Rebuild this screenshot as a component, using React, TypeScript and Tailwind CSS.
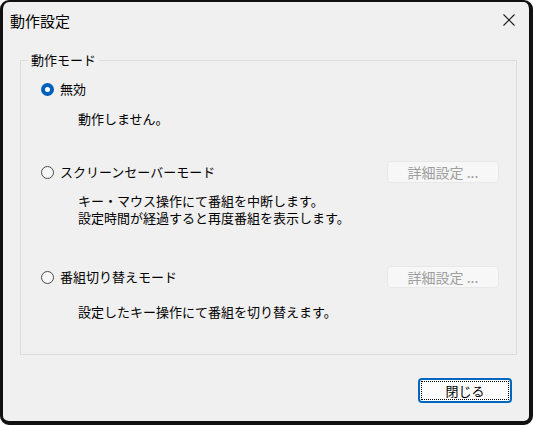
import React from "react";

const font = { fontFamily: '"Noto Sans CJK JP", "Noto Sans", sans-serif' };

function Radio({ checked }: { checked?: boolean }) {
  if (checked) {
    return (
      <span className="w-[13px] h-[13px] rounded-full bg-[#005fb8] flex items-center justify-center shrink-0">
        <span className="w-[5px] h-[5px] rounded-full bg-white" />
      </span>
    );
  }
  return <span className="w-[13px] h-[13px] rounded-full border border-[#4a4a4a] bg-[#f7f7f7] shrink-0" />;
}

function DisabledButton() {
  return (
    <div className="w-[112px] h-[22px] rounded-[4px] border border-[#e8e8e8] bg-[#f7f7f7] flex items-center justify-center text-[14px] text-[#9d9d9d] leading-none">
      詳細設定 ...
    </div>
  );
}

export default function App() {
  return (
    <div className="w-[533px] h-[425px] bg-white" style={font}>
      <div className="w-[533px] h-[425px] bg-[#f0f0f0] border-t-2 border-l-[3px] border-r-[4px] border-b-[4px] border-[#111] rounded-[9px] flex flex-col">
        <div className="h-[36px] flex items-center justify-between pl-[7px] pr-[14px] shrink-0">
          <span className="text-[15px] text-black leading-none">動作設定</span>
          <svg width="12" height="12" viewBox="0 0 12 12">
            <path d="M0.5 0.5 L11.5 11.5 M11.5 0.5 L0.5 11.5" stroke="#1a1a1a" strokeWidth="1.1" fill="none" />
          </svg>
        </div>
        <div className="relative ml-[17px] mt-[22px] w-[497px] h-[295px] border border-[#dcdcdc] shrink-0">
          <span className="absolute -top-[9px] left-[7px] bg-[#f0f0f0] px-[3px] text-[13px] leading-[16px] text-black">
            動作モード
          </span>
          <div className="flex flex-col pt-[17px] text-[13px] text-black leading-[16px]">
            <div className="h-[22px] flex items-center pl-[20px] gap-[6px]">
              <Radio checked />
              <span>無効</span>
            </div>
            <div className="mt-[11px] pl-[57px]">動作しません。</div>
            <div className="mt-[34px] h-[22px] flex items-center justify-between pl-[20px] pr-[17px]">
              <div className="flex items-center gap-[6px]">
                <Radio />
                <span>スクリーンセーバーモード</span>
              </div>
              <DisabledButton />
            </div>
            <div className="mt-[10px] pl-[57px] flex flex-col gap-[1px]">
              <span className="h-[16px] leading-[16px]">キー・マウス操作にて番組を中断します。</span>
              <span className="h-[16px] leading-[16px]">設定時間が経過すると再度番組を表示します。</span>
            </div>
            <div className="mt-[40px] h-[22px] flex items-center justify-between pl-[20px] pr-[17px]">
              <div className="flex items-center gap-[6px]">
                <Radio />
                <span>番組切り替えモード</span>
              </div>
              <DisabledButton />
            </div>
            <div className="mt-[16px] pl-[57px]">設定したキー操作にて番組を切り替えます。</div>
          </div>
        </div>
        <div className="flex justify-end pr-[17px] mt-[23px]">
          <div className="w-[94px] h-[25px] rounded-[4px] border-2 border-[#0067c0] bg-[#fdfdfd] p-[1px]">
            <div className="w-full h-full border border-dotted border-black flex items-center justify-center text-[13px] text-black leading-none">
              閉じる
            </div>
          </div>
        </div>
      </div>
    </div>
  );
}
